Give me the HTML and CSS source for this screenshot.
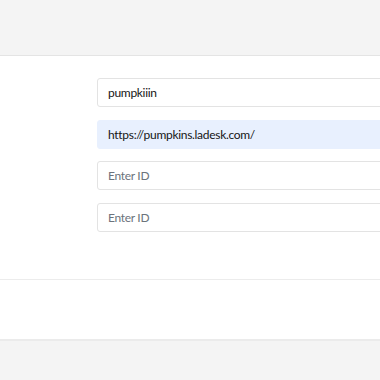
FILE: index.html
```html
<!DOCTYPE html>
<html lang="en">
<head>
    <meta charset="UTF-8">
    <meta name="viewport" content="width=device-width, initial-scale=1.0">
    <link rel="stylesheet" href="styles.css">
</head>
<body>
    <div class="top"></div>
    <div class="panel">
        <div class="form">
            <div class="field"><input class="inp" type="text" value="pumpkiiin" autofocus></div>
            <div class="field"><input class="inp filled" type="text" value="https://pumpkins.ladesk.com/"></div>
            <div class="field"><input class="inp" type="text" placeholder="Enter ID"></div>
            <div class="field"><input class="inp" type="text" placeholder="Enter ID"></div>
        </div>
        <div class="footer"></div>
    </div>
</body>
</html>
```

FILE: styles.css
```css
*{
    box-sizing: border-box;
    margin: 0;
    padding: 0;
}
body{
    background: #f4f4f4;
    font-family: Lato, "Open Sans", sans-serif;
    overflow: hidden;
    height: 380px;
}
.top{
    height: 55px;
}
.panel{
    background: #fff;
    border-top: 1px solid #e4e4e4;
    border-bottom: 2px solid #ebebeb;
}
.form{
    display: flex;
    flex-direction: column;
    gap: 12.5px;
    padding: 22px 0 47px 97px;
    border-bottom: 1px solid #ececec;
}
.field{
    width: 320px;
}
.inp{
    width: 100%;
    height: 29px;
    border: 1px solid #e3e3e3;
    border-radius: 3px;
    padding: 0 10px;
    font-family: Lato, "Open Sans", sans-serif;
    font-size: 12px;
    letter-spacing: -0.3px;
    color: #151515;
    background: #fff;
    outline: none;
}
.inp::placeholder{
    color: #6c737c;
}
.filled{
    background: #e8f0fe;
    border-color: #e8f0fe;
}
.footer{
    height: 59px;
}
```
